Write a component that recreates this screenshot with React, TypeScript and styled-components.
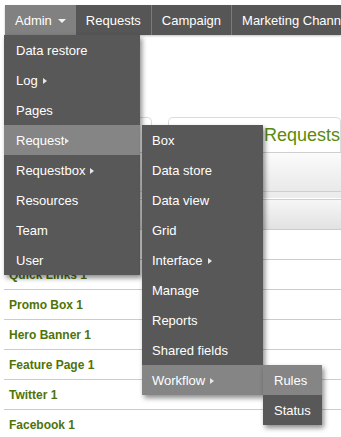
import styled, { createGlobalStyle } from "styled-components";

const GlobalStyle = createGlobalStyle`
  html, body {
    margin: 0;
    padding: 0;
    background: #fff;
    overflow: hidden;
  }
  body {
    font-family: "Liberation Sans", Arial, sans-serif;
    font-size: 13px;
  }
`;

const Page = styled.div`
  width: 341px;
  height: 437px;
  padding-top: 5px;
  box-sizing: border-box;
  overflow: hidden;
`;

// top navigation
const NavBar = styled.nav`
  display: flex;
  height: 30px;
  margin-left: 5px;
  background: #565656;
  white-space: nowrap;
  box-shadow: 0 1px 2px rgba(0, 0, 0, 0.25);
  position: relative;
  z-index: 10;
`;

const NavItem = styled.div<{ $active?: boolean; $first?: boolean }>`
  position: relative;
  display: flex;
  align-items: center;
  box-sizing: border-box;
  padding: 1px 10px 0 10px;
  line-height: 29px;
  color: #fff;
  background: ${(p) => (p.$active ? "#818181" : "transparent")};
  border-left: ${(p) => (p.$first ? "none" : "1px solid #7a7a7a")};
  flex-shrink: 0;
`;

const Caret = styled.span`
  display: inline-block;
  width: 0;
  height: 0;
  margin-left: 6px;
  border-left: 4px solid transparent;
  border-right: 4px solid transparent;
  border-top: 4px solid #f2f2f2;
`;

const Arrow = styled.span<{ $tight?: boolean }>`
  display: inline-block;
  width: 0;
  height: 0;
  margin-left: ${(p) => (p.$tight ? "1px" : "5px")};
  border-top: 3px solid transparent;
  border-bottom: 3px solid transparent;
  border-left: 4px solid #e6e6e6;
`;

// dropdown menus
const Menu = styled.div<{ $width: number; $left: number; $top: number }>`
  position: absolute;
  left: ${(p) => p.$left}px;
  top: ${(p) => p.$top}px;
  width: ${(p) => p.$width}px;
  background: #585858;
  box-shadow: 2px 3px 5px rgba(0, 0, 0, 0.45);
  display: flex;
  flex-direction: column;
  z-index: 20;
`;

const MenuItem = styled.div<{ $active?: boolean; $pad?: number }>`
  position: relative;
  display: flex;
  align-items: center;
  box-sizing: border-box;
  height: 30px;
  padding-top: 1px;
  padding-left: ${(p) => p.$pad ?? 10}px;
  color: #fff;
  white-space: nowrap;
  background: ${(p) => (p.$active ? "#858585" : "transparent")};
`;

// page content beneath the menus
const Content = styled.div`
  padding-left: 4px;
  padding-top: 82px;
`;

const TabsRow = styled.div`
  display: flex;
  height: 35px;
`;

const Tab = styled.div<{ $width?: number; $gap?: number }>`
  box-sizing: border-box;
  height: 35px;
  margin-left: ${(p) => p.$gap ?? 0}px;
  ${(p) => (p.$width ? `width: ${p.$width}px;` : "flex: 1;")}
  border: 1px solid #dcdcdc;
  border-bottom: none;
  border-radius: 5px 5px 0 0;
`;

const Heading = styled.h2`
  margin: 0;
  padding: 2px 0 0 95px;
  line-height: 31px;
  font-size: 18px;
  font-weight: normal;
  color: #5b8a0c;
  white-space: nowrap;
`;

const GridHeader = styled.div<{ $h: number; $from: string; $to: string }>`
  height: ${(p) => p.$h}px;
  background: linear-gradient(${(p) => p.$from}, ${(p) => p.$to});
  border-top: 1px solid #cfcfcf;
`;

const Strip = styled.div`
  height: 6px;
  background: #ececec;
  border-top: 1px solid #cfcfcf;
  border-bottom: 1px solid #fff;
`;

const Row = styled.div<{ $first?: boolean }>`
  display: flex;
  align-items: center;
  height: 29px;
  padding-left: 5px;
  border-top: ${(p) => (p.$first ? "1px solid #cccccc" : "none")};
  border-bottom: 1px solid #cccccc;
  font-size: 12px;
  font-weight: bold;
  color: #4e7407;
  white-space: nowrap;
`;

const rows = ["", "Quick Links 1", "Promo Box 1", "Hero Banner 1", "Feature Page 1", "Twitter 1", "Facebook 1"];

export default function App() {
  return (
    <Page>
      <GlobalStyle />
      <NavBar>
        <NavItem $active $first>
          Admin
          <Caret />
          <Menu $width={136} $left={-1} $top={30}>
            <MenuItem $pad={12}>Data restore</MenuItem>
            <MenuItem $pad={12}>
              Log
              <Arrow />
            </MenuItem>
            <MenuItem $pad={12}>Pages</MenuItem>
            <MenuItem $pad={12} $active>
              Request
              <Arrow $tight />
              <Menu $width={121} $left={138} $top={0}>
                <MenuItem>Box</MenuItem>
                <MenuItem>Data store</MenuItem>
                <MenuItem>Data view</MenuItem>
                <MenuItem>Grid</MenuItem>
                <MenuItem>
                  Interface
                  <Arrow />
                </MenuItem>
                <MenuItem>Manage</MenuItem>
                <MenuItem>Reports</MenuItem>
                <MenuItem>Shared fields</MenuItem>
                <MenuItem $active>
                  Workflow
                  <Arrow />
                  <Menu $width={59} $left={121} $top={0}>
                    <MenuItem $pad={11} $active>
                      Rules
                    </MenuItem>
                    <MenuItem $pad={11}>Status</MenuItem>
                  </Menu>
                </MenuItem>
              </Menu>
            </MenuItem>
            <MenuItem $pad={12}>
              Requestbox
              <Arrow />
            </MenuItem>
            <MenuItem $pad={12}>Resources</MenuItem>
            <MenuItem $pad={12}>Team</MenuItem>
            <MenuItem $pad={12}>User</MenuItem>
          </Menu>
        </NavItem>
        <NavItem $first>Requests</NavItem>
        <NavItem>Campaign</NavItem>
        <NavItem>Marketing Channels</NavItem>
      </NavBar>

      <Content>
        <TabsRow>
          <Tab $width={53} $gap={96} />
          <Tab $gap={16}>
            <Heading>Requests</Heading>
          </Tab>
        </TabsRow>
        <GridHeader $h={38} $from="#fbfbfb" $to="#e9e9e9" />
        <Strip />
        <GridHeader $h={29} $from="#f6f6f6" $to="#e2e2e2" />
        {rows.map((r, i) => (
          <Row key={i} $first={i === 0}>
            {r}
          </Row>
        ))}
      </Content>
    </Page>
  );
}
